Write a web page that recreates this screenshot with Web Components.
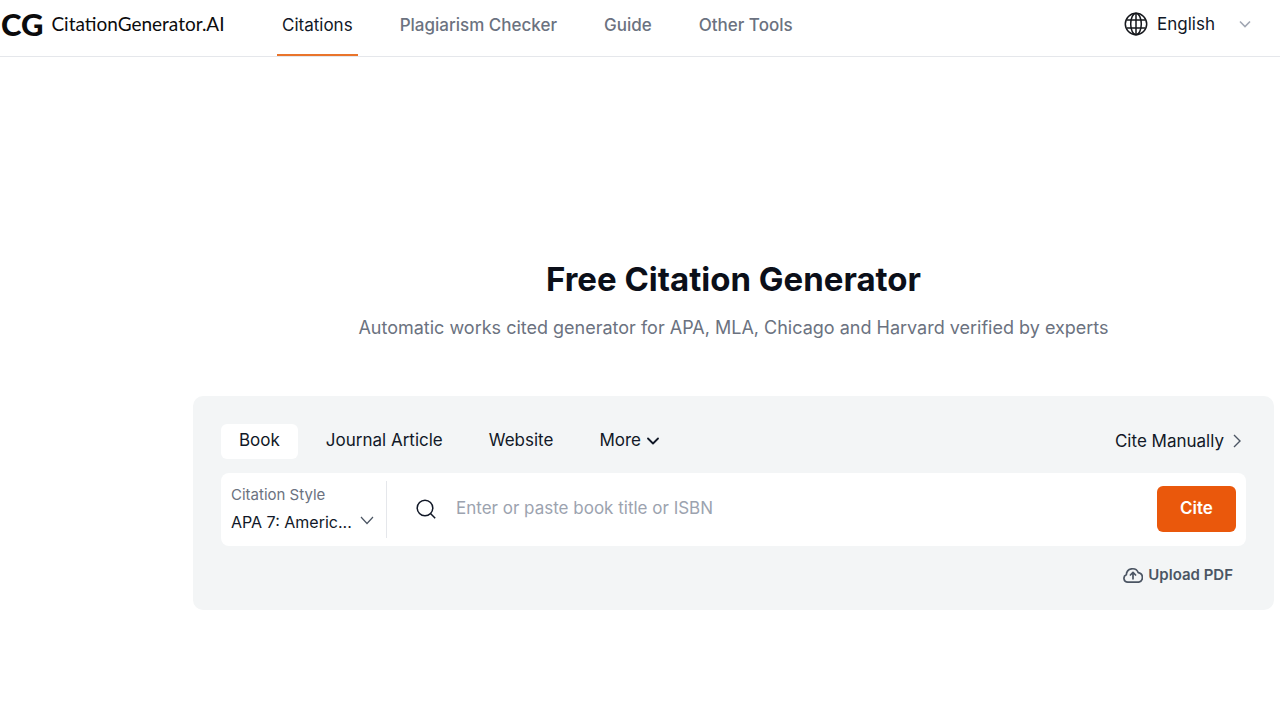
<!doctype html>
<html lang="en">
  <head>
    <meta charset="UTF-8" />
    <meta name="viewport" content="width=device-width, initial-scale=1.0" />
    <title>Free Citation Generator</title>
    <style>
      body {
        margin: 0;
        background: #fff;
        color: #111827;
        font-family: Inter, "Liberation Sans", sans-serif;
        font-size: 17px;
        line-height: 24px;
      }

      main {
        padding: 200px 6px 40px 193px;
      }
    </style>
  </head>
  <body>
    <site-header>
      <nav-link href="#citations" active>Citations</nav-link>
      <nav-link href="#plagiarism">Plagiarism Checker</nav-link>
      <nav-link href="#guide">Guide</nav-link>
      <nav-link href="#tools">Other Tools</nav-link>
    </site-header>
    <main>
      <page-intro>
        <span slot="title">Free Citation Generator</span>
        Automatic works cited generator for APA, MLA, Chicago and Harvard verified by experts
      </page-intro>
      <citation-panel>
        <source-tab slot="tabs" active>Book</source-tab>
        <source-tab slot="tabs">Journal Article</source-tab>
        <source-tab slot="tabs">Website</source-tab>
        <source-tab slot="tabs" more>More</source-tab>
        <citation-search></citation-search>
      </citation-panel>
    </main>
    <script type="module">
      class SiteHeader extends HTMLElement {
        constructor() {
          super();
          this.attachShadow({ mode: "open" });
          this.shadowRoot.innerHTML = `
            <style>
              :host {
                display: block;
                border-bottom: 1px solid #e5e7eb;
              }
              header {
                display: flex;
                align-items: center;
                height: 56px;
              }
              .logo {
                display: flex;
                align-items: center;
                gap: 8px;
                width: 277px;
                padding: 0 0 8px 1px;
                box-sizing: border-box;
                color: #0b0b0c;
                font-family: Lato, sans-serif;
                font-size: 19px;
                text-decoration: none;
              }
              .logo b {
                font-size: 31px;
                font-weight: 900;
              }
              nav {
                display: flex;
                align-self: stretch;
                gap: 37px;
                flex: 1;
              }
              label {
                display: grid;
                grid-template-columns: 24px 1fr 12px;
                align-items: center;
                column-gap: 9px;
                width: 127px;
                margin-right: 29px;
                padding-bottom: 8px;
              }
              select {
                appearance: none;
                min-width: 0;
                padding: 0;
                border: 0;
                background: none;
                color: inherit;
                font: inherit;
              }
              svg {
                display: block;
                fill: none;
              }
            </style>
            <header>
              <a class="logo" href="#"><b>CG</b><span>CitationGenerator.AI</span></a>
              <nav><slot></slot></nav>
              <label>
                <svg width="24" height="24" viewBox="0 0 24 24" stroke="#16181d" stroke-width="1.5">
                  <circle cx="12" cy="12" r="10.7" />
                  <ellipse cx="12" cy="12" rx="5.3" ry="10.7" />
                  <path d="M12 1.3v21.4M2.5 8h19M2.5 16h19" />
                </svg>
                <select aria-label="Language">
                  <option>English</option>
                </select>
                <svg width="12" height="8" viewBox="0 0 12 8" stroke="#a1a7b3" stroke-width="1.6">
                  <path d="m1 1.5 5 5 5-5" />
                </svg>
              </label>
            </header>
          `;
        }
      }

      class NavLink extends HTMLElement {
        constructor() {
          super();
          this.attachShadow({ mode: "open" });
          this.shadowRoot.innerHTML = `
            <style>
              :host {
                display: flex;
              }
              a {
                padding: 13px 5px 17px;
                border-bottom: 2px solid transparent;
                color: #6b7280;
                font-weight: 500;
                text-decoration: none;
                white-space: nowrap;
              }
              :host([active]) a {
                border-color: #e9742b;
                color: #111827;
                font-weight: 400;
              }
            </style>
            <a><slot></slot></a>
          `;
        }

        connectedCallback() {
          this.shadowRoot.querySelector("a").href = this.getAttribute("href");
        }
      }

      class PageIntro extends HTMLElement {
        constructor() {
          super();
          this.attachShadow({ mode: "open" });
          this.shadowRoot.innerHTML = `
            <style>
              :host {
                display: block;
                margin-bottom: 56px;
                text-align: center;
              }
              h1 {
                margin: 0 0 14px;
                color: #0b0f19;
                font-size: 33px;
                font-weight: 700;
                line-height: 45px;
              }
              p {
                margin: 0;
                color: #6b7280;
                font-size: 18px;
              }
            </style>
            <h1><slot name="title"></slot></h1>
            <p><slot></slot></p>
          `;
        }
      }

      class CitationPanel extends HTMLElement {
        constructor() {
          super();
          this.attachShadow({ mode: "open" });
          this.shadowRoot.innerHTML = `
            <style>
              :host {
                display: block;
                padding: 28px 28px 23px;
                border-radius: 10px;
                background: #f3f5f6;
              }
              .top {
                display: flex;
                align-items: center;
                gap: 10px;
                margin-bottom: 14px;
              }
              a {
                display: flex;
                align-items: center;
                gap: 8px;
                margin-left: auto;
                padding: 4px 4px 6px;
                color: #111827;
                text-decoration: none;
              }
              .upload {
                display: flex;
                align-items: center;
                gap: 5px;
                margin: 17px 13px 0 auto;
                padding: 0;
                border: 0;
                background: none;
                color: #4b5563;
                font: 600 15px/24px Inter, sans-serif;
              }
              svg {
                fill: none;
              }
            </style>
            <div class="top">
              <slot name="tabs"></slot>
              <a href="#manual">
                Cite Manually
                <svg width="10" height="14" viewBox="0 0 10 14" stroke="#4b5563" stroke-width="1.4">
                  <path d="m2 1 6 6-6 6" />
                </svg>
              </a>
            </div>
            <slot></slot>
            <button class="upload" type="button">
              <svg width="20" height="18" viewBox="0 0 21 18" stroke="#4b5563" stroke-width="1.8" stroke-linecap="round" stroke-linejoin="round">
                <path d="M5 16.5a4 4 0 0 1-1.5-7.7A6.5 6.5 0 0 1 16 6.5a5.1 5.1 0 0 1 .5 10ZM10.5 13V6.5M7.8 9l2.7-2.7L13.2 9" />
              </svg>
              Upload PDF
            </button>
          `;
        }
      }

      class SourceTab extends HTMLElement {
        constructor() {
          super();
          this.attachShadow({ mode: "open" });
          this.shadowRoot.innerHTML = `
            <style>
              :host {
                display: block;
              }
              button {
                display: flex;
                align-items: center;
                gap: 6px;
                padding: 4px 18px 7px;
                border: 0;
                border-radius: 6px;
                background: none;
                color: #111827;
                font: inherit;
              }
              :host([active]) button {
                background: #fff;
              }
              svg {
                display: none;
                margin-top: 2px;
                fill: none;
              }
              :host([more]) svg {
                display: block;
              }
            </style>
            <button type="button">
              <slot></slot>
              <svg width="12" height="8" viewBox="0 0 12 8" stroke="#111827" stroke-width="1.8" stroke-linecap="round" stroke-linejoin="round">
                <path d="m1 1.5 5 5 5-5" />
              </svg>
            </button>
          `;
        }
      }

      class CitationSearch extends HTMLElement {
        constructor() {
          super();
          this.attachShadow({ mode: "open" });
          this.shadowRoot.innerHTML = `
            <style>
              :host {
                display: block;
              }
              form {
                display: flex;
                align-items: center;
                padding: 8px 10px;
                border-radius: 8px;
                background: #fff;
              }
              .style {
                width: 155px;
                height: 57px;
                border-right: 1px solid #e5e7eb;
              }
              .style label {
                display: block;
                padding-top: 2px;
                color: #6b7280;
                font-size: 15px;
              }
              .picker {
                display: flex;
                align-items: center;
                gap: 6px;
                margin-top: 3px;
                padding-right: 12px;
              }
              .picker svg {
                margin-bottom: 4px;
              }
              select,
              input {
                appearance: none;
                flex: 1;
                min-width: 0;
                padding: 0;
                border: 0;
                outline: 0;
                background: none;
                color: #111827;
                font: inherit;
              }
              select {
                font-size: 16px;
              }
              .search {
                display: flex;
                align-items: center;
                flex: 1;
                gap: 20px;
                padding: 0 20px 2px 29px;
              }
              input {
                padding-bottom: 2px;
              }
              input::placeholder {
                color: #9ca3af;
              }
              button {
                width: 79px;
                height: 46px;
                margin-bottom: 2px;
                padding: 0 0 2px;
                border: 0;
                border-radius: 6px;
                background: #ea580c;
                color: #fff;
                font: 600 17px/24px Inter, sans-serif;
              }
              svg {
                flex: none;
                fill: none;
              }
            </style>
            <form>
              <div class="style">
                <label for="style">Citation Style</label>
                <div class="picker">
                  <select id="style">
                    <option>APA 7: Americ...</option>
                  </select>
                  <svg width="14" height="9" viewBox="0 0 14 9" stroke="#4b5563" stroke-width="1.2">
                    <path d="m1 1 6 6.5L13 1" />
                  </svg>
                </div>
              </div>
              <div class="search">
                <svg width="20" height="20" viewBox="0 0 20 20" stroke="#111827" stroke-width="1.5">
                  <circle cx="9" cy="9" r="7.8" />
                  <path d="m14.5 14.5 4.7 4.7" />
                </svg>
                <input type="text" aria-label="Book title or ISBN" placeholder="Enter or paste book title or ISBN" />
              </div>
              <button type="button">Cite</button>
            </form>
          `;
        }
      }

      customElements.define("site-header", SiteHeader);
      customElements.define("nav-link", NavLink);
      customElements.define("page-intro", PageIntro);
      customElements.define("citation-panel", CitationPanel);
      customElements.define("source-tab", SourceTab);
      customElements.define("citation-search", CitationSearch);
    </script>
  </body>
</html>
